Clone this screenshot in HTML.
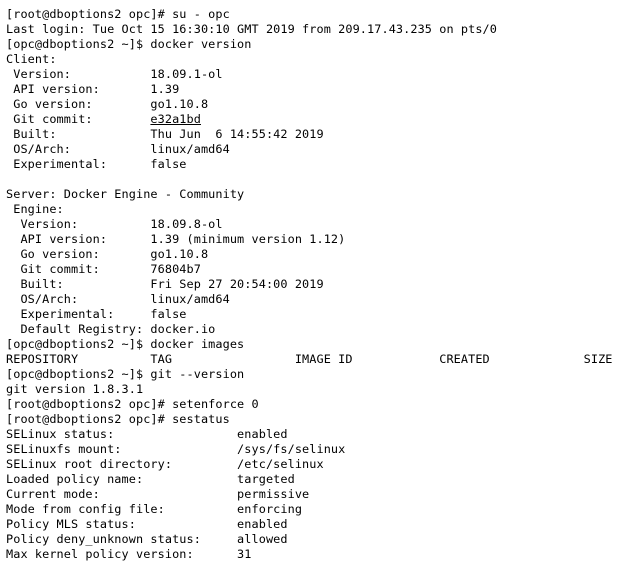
<html><head><style>
body{margin:0;background:#fff;}
pre{margin:0;padding:7px 0 0 6px;font-family:"DejaVu Sans Mono","Liberation Mono",monospace;font-size:11.85px;letter-spacing:0.09px;line-height:15px;color:#000;}
u{text-decoration:underline;}
</style></head><body><pre>[root@dboptions2 opc]# su - opc
Last login: Tue Oct 15 16:30:10 GMT 2019 from 209.17.43.235 on pts/0
[opc@dboptions2 ~]$ docker version
Client:
 Version:           18.09.1-ol
 API version:       1.39
 Go version:        go1.10.8
 Git commit:        <u>e32a1bd</u>
 Built:             Thu Jun  6 14:55:42 2019
 OS/Arch:           linux/amd64
 Experimental:      false

Server: Docker Engine - Community
 Engine:
  Version:          18.09.8-ol
  API version:      1.39 (minimum version 1.12)
  Go version:       go1.10.8
  Git commit:       76804b7
  Built:            Fri Sep 27 20:54:00 2019
  OS/Arch:          linux/amd64
  Experimental:     false
  Default Registry: docker.io
[opc@dboptions2 ~]$ docker images
REPOSITORY          TAG                 IMAGE ID            CREATED             SIZE
[opc@dboptions2 ~]$ git --version
git version 1.8.3.1
[root@dboptions2 opc]# setenforce 0
[root@dboptions2 opc]# sestatus
SELinux status:                 enabled
SELinuxfs mount:                /sys/fs/selinux
SELinux root directory:         /etc/selinux
Loaded policy name:             targeted
Current mode:                   permissive
Mode from config file:          enforcing
Policy MLS status:              enabled
Policy deny_unknown status:     allowed
Max kernel policy version:      31
</pre></body></html>
